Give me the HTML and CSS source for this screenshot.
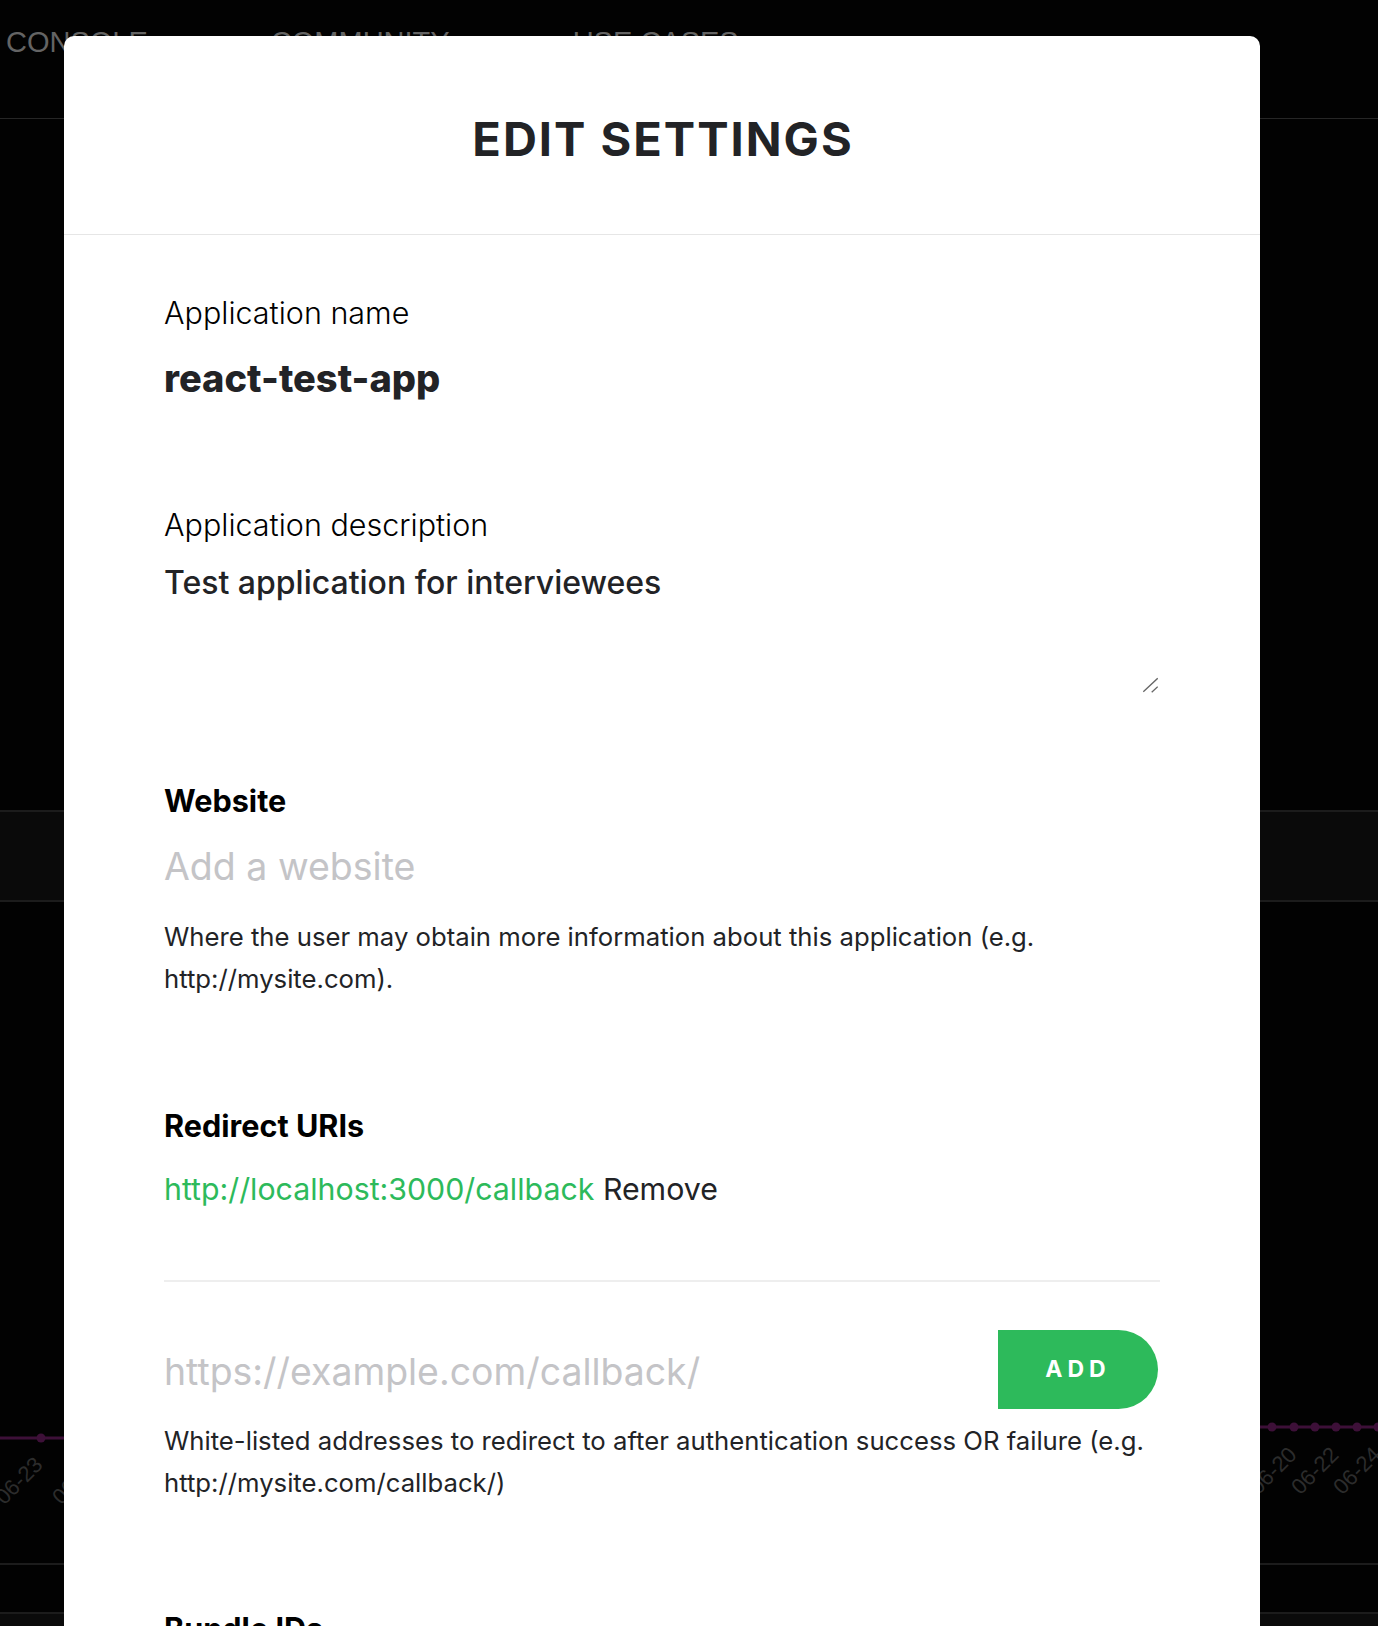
FILE: index.html
```html
<!DOCTYPE html>
<html lang="en">
<head>
<meta charset="utf-8">
<title>Edit settings</title>
<link rel="stylesheet" href="styles.css">
</head>
<body>
<div class="bg">
  <nav class="nav">
    <span>CONSOLE</span>
    <span>COMMUNITY</span>
    <span>USE CASES</span>
  </nav>
  <div class="bg-gap"></div>
  <div class="bg-band"></div>
  <div class="bg-chart">
    <svg class="chart" width="1378" height="120" viewBox="0 0 1378 120">
      <g stroke="#3d1038" stroke-width="3" fill="none">
        <path d="M0 38 L300 38"/>
        <path d="M1080 27 L1378 27"/>
      </g>
      <g fill="#3d1038">
        <circle cx="41" cy="38" r="4.5"/>
        <circle cx="1272" cy="27" r="4.5"/>
        <circle cx="1294" cy="27" r="4.5"/>
        <circle cx="1315" cy="27" r="4.5"/>
        <circle cx="1336" cy="27" r="4.5"/>
        <circle cx="1357" cy="27" r="4.5"/>
        <circle cx="1378" cy="27" r="4.5"/>
      </g>
      <g class="chart-labels" text-anchor="end">
        <text x="44" y="66" transform="rotate(-45 44 66)">06-23</text>
        <text x="101" y="66" transform="rotate(-45 101 66)">06-24</text>
        <text x="1298" y="56" transform="rotate(-45 1298 56)">06-20</text>
        <text x="1340" y="56" transform="rotate(-45 1340 56)">06-22</text>
        <text x="1382" y="56" transform="rotate(-45 1382 56)">06-24</text>
      </g>
    </svg>
  </div>
  <div class="bg-row"></div>
  <div class="bg-foot"></div>
</div>

<div class="modal">
  <header class="modal-head">
    <h1 class="modal-title">EDIT SETTINGS</h1>
  </header>
  <div class="modal-body">
    <p class="field-label">Application name</p>
    <p class="app-name">react-test-app</p>

    <p class="field-label label-desc">Application description</p>
    <div class="desc-wrap">
      <textarea class="desc">Test application for interviewees</textarea>
      <svg class="resize-grip" width="16" height="16" viewBox="0 0 16 16" aria-hidden="true">
        <path d="M1.3 14.7 L15.7 1.3 M9.7 15.3 L15.7 9.7" stroke="#666" stroke-width="1.3" fill="none"/>
      </svg>
    </div>

    <h2 class="section-title title-website">Website</h2>
    <input class="text-input input-website" type="text" placeholder="Add a website">
    <p class="hint">Where the user may obtain more information about this application (e.g. http://mysite.com).</p>

    <h2 class="section-title title-redirect">Redirect URIs</h2>
    <div class="uri-row"><a class="uri-link" href="#">http://localhost:3000/callback</a> <span class="uri-remove">Remove</span></div>
    <div class="divider"></div>
    <div class="add-row">
      <input class="text-input input-uri" type="text" placeholder="https://example.com/callback/">
      <button class="add-btn" type="button">ADD</button>
    </div>
    <p class="hint hint-redirect">White-listed addresses to redirect to after authentication success OR failure (e.g. http://mysite.com/callback/)</p>

    <h2 class="section-title title-bundle">Bundle IDs</h2>
  </div>
</div>
</body>
</html>
```
FILE: styles.css
```css
* { box-sizing: border-box; }
html, body { margin: 0; padding: 0; }
body {
  width: 1378px;
  height: 1626px;
  overflow: hidden;
  position: relative;
  background: #020202;
  font-family: Inter, "Noto Sans", sans-serif;
}

/* ---------- page behind the dialog ---------- */
.bg { width: 100%; }
.nav {
  height: 119px;
  border-bottom: 1px solid #262626;
  display: flex;
  gap: 123px;
  padding: 25px 0 0 6px;
  font-family: "Liberation Sans", Arial, sans-serif;
  font-size: 29px;
  line-height: 1.2;
  color: #646464;
}
.bg-gap { height: 691px; }
.bg-band {
  height: 92px;
  background: #0a0a0a;
  border-top: 2px solid #1c1c1c;
  border-bottom: 2px solid #1c1c1c;
}
.bg-chart { height: 661px; padding-top: 498px; }
.chart { display: block; }
.chart-labels { font-family: "Liberation Sans", Arial, sans-serif; font-size: 22px; fill: #2c2c2c; }
.bg-row { height: 49px; border-top: 2px solid #1c1c1c; }
.bg-foot { height: 20px; border-top: 2px solid #1c1c1c; background: #0b0b0b; }

/* ---------- dialog ---------- */
.modal {
  position: absolute;
  left: 64px;
  top: 36px;
  width: 1196px;
  height: 1640px;
  background: #fff;
  border-radius: 10px 10px 0 0;
}
.modal-head {
  height: 199px;
  border-bottom: 1px solid #e6e6e6;
  padding: 75px 0 0 2px;
  text-align: center;
}
.modal-title {
  margin: 0;
  font-size: 47px;
  line-height: 1.2;
  font-weight: 700;
  letter-spacing: 2px;
  color: #222326;
}
.modal-body { padding: 60px 100px 0; }

.field-label {
  margin: 0;
  font-size: 30.5px;
  font-weight: 300;
  line-height: 1.2;
  color: #000;
}
.app-name {
  margin: 24px 0 0;
  font-size: 38px;
  font-weight: 800;
  line-height: 1.2;
  color: #222326;
}
.label-desc { margin-top: 106px; }
.desc-wrap {
  position: relative;
  margin-top: 20px;
}
.desc {
  display: block;
  width: 100%;
  height: 130px;
  margin: 0;
  padding: 0;
  border: 0;
  outline: 0;
  resize: none;
  background: transparent;
  font-family: Inter, "Noto Sans", sans-serif;
  font-size: 32px;
  font-weight: 500;
  line-height: 1.2;
  color: #222326;
}
.resize-grip {
  position: absolute;
  right: 2px;
  bottom: 1px;
  display: block;
}

.section-title {
  margin: 0;
  font-size: 30.6px;
  font-weight: 700;
  line-height: 1.2;
  color: #000;
}
.title-website { margin-top: 89px; }
.title-redirect { margin-top: 108px; }
.title-bundle { margin-top: 107px; }

.text-input {
  display: block;
  width: 100%;
  height: 45px;
  padding: 0;
  border: 0;
  outline: 0;
  background: transparent;
  font-family: Inter, "Noto Sans", sans-serif;
  font-size: 37.5px;
  font-weight: 400;
  line-height: 1.2;
  color: #222326;
}
.text-input::placeholder { color: #c4c4c7; opacity: 1; }
.input-website { margin-top: 25px; }

.hint {
  margin: 27px 0 0;
  font-size: 25.7px;
  line-height: 42px;
  color: #222326;
}
.hint-redirect { margin-top: 11px; }

.uri-row {
  margin-top: 26px;
  font-size: 30.3px;
  line-height: 1.2;
  color: #222326;
}
.uri-link { color: #2dba5b; text-decoration: none; }

.divider { height: 2px; margin-top: 72px; background: #eeeeee; }

.add-row {
  display: flex;
  align-items: center;
  margin-top: 48px;
}
.input-uri { flex: 1; width: auto; margin-top: 4px; font-size: 37.4px; }
.add-btn {
  flex: none;
  width: 160px;
  height: 79px;
  margin-right: 2px;
  padding: 0;
  border: 0;
  border-radius: 0 40px 40px 0;
  background: #2dba5b;
  color: #fff;
  font-family: Inter, "Noto Sans", sans-serif;
  font-size: 23px;
  font-weight: 700;
  letter-spacing: 5px;
}
```
